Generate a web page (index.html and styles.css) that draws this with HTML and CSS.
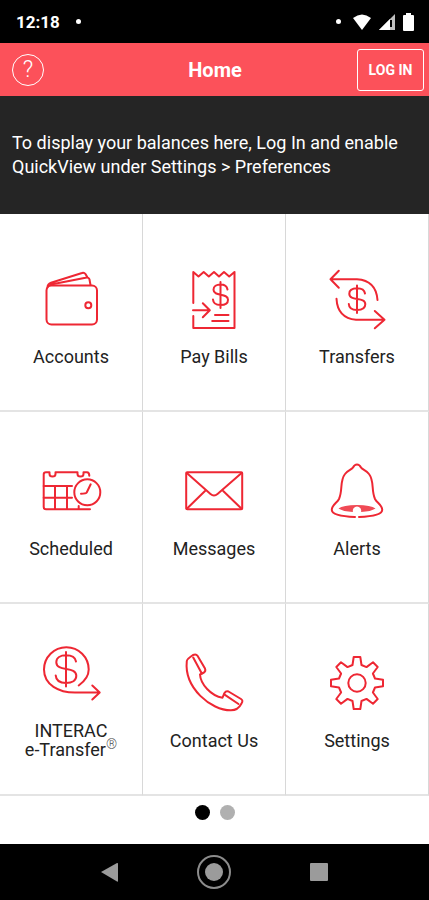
FILE: index.html
```html
<!DOCTYPE html>
<html lang="en">
<head>
<meta charset="UTF-8">
<meta name="viewport" content="width=device-width, initial-scale=1.0">
<title>Home</title>
<link rel="stylesheet" href="styles.css">
</head>
<body>

<div class="status-bar">
    <span class="time">12:18</span>
    <span class="status-dot"></span>
    <div class="status-icons">
        <span class="status-dot"></span>
        <svg class="wifi" viewBox="0 0 18 16"><path d="M0 4Q9 -3 18 4L9 16z"/></svg>
        <svg class="signal" viewBox="0 0 16 16"><path d="M0 16L16 0V16z" opacity=".75"/><path d="M0 16L11 5V16z"/><path class="signal-gap" d="M12 6v7"/></svg>
        <svg class="battery" viewBox="0 0 11 18"><path d="M3 0h5v2h2q1 0 1 1v14q0 1-1 1H1q-1 0-1-1V3q0-1 1-1h2z"/></svg>
    </div>
</div>

<header class="header">
    <button class="help" aria-label="Help">?</button>
    <h1>Home</h1>
    <button class="login">LOG IN</button>
</header>

<p class="notice">To display your balances here, Log In and enable QuickView under Settings &gt; Preferences</p>

<nav class="tiles">
    <a href="#" class="tile">
        <svg class="icon" viewBox="0 0 64 64">
            <rect x="7.5" y="18.5" width="50.5" height="39" rx="5"/>
            <path d="M8.500 20.500Q8.500 17 12 15.800L43 6Q45 5 46.500 7L48.500 10.500M12 17.500L46.500 10.800Q50 10 50.500 12.500L51.500 18"/>
            <circle cx="49.300" cy="38.300" r="3"/>
        </svg>
        <span>Accounts</span>
    </a>
    <a href="#" class="tile">
        <svg class="icon" viewBox="0 0 64 64">
            <path d="M11.300 36V5L16.500 9.500L21.700 5L26.800 9.500L32 5L37 9.500L42 5L47.200 9.500L52.500 5V61H11.300V49"/>
            <path d="M11 43.300H27.500M20.800 36.300L27.800 43.300L20.800 50.300M33 48h13.500M30.200 54h16.300"/>
            <path d="M38.500 15v26M45.500 22.500c-.5-3-3-5-7-5s-7 2-7 5.200c0 7.500 14.500 2.500 14.500 10 0 3.500-3 5.300-7.500 5.300s-7.300-2-7.500-5.500"/>
        </svg>
        <span>Pay Bills</span>
    </a>
    <a href="#" class="tile">
        <svg class="icon" viewBox="0 0 64 64">
            <path d="M13.800 3.700L5.500 12.300L13.800 20.700M5.500 12.300H32Q51 13.500 52.500 33"/>
            <path d="M49.800 44L59.500 52.700L49.800 61.300M59.500 52.700H31Q12.500 51 11.500 31.700"/>
            <path d="M32 18.500v27.500M40 26.500c-.5-3.300-3.500-5.200-8-5.200s-7.700 2-7.700 5.500c0 8 16 2.500 16 10.500 0 3.700-3.500 5.700-8.300 5.700s-8-2.200-8.200-6"/>
        </svg>
        <span>Transfers</span>
    </a>
    <a href="#" class="tile">
        <svg class="icon" viewBox="0 0 64 64">
            <path d="M51 50.300H7q-2.300 0-2.300-2.300V15.600q0-2.300 2.300-2.300H10.500V15q0 2.500 3 2.500t3-2.500V13.300H38.500V15q0 2.500 3 2.500t3-2.500V13.300H48q2.300 0 2.300 3.500"/>
            <path d="M4.700 27H33M4.700 38.700H33M16 27V50M28 27V50M39.700 47V50"/>
            <circle cx="48.300" cy="33.300" r="13"/>
            <path d="M51.700 25.300L47.700 33.500Q47 34.700 42 34.700"/>
        </svg>
        <span>Scheduled</span>
    </a>
    <a href="#" class="tile">
        <svg class="icon" viewBox="0 0 64 64">
            <rect x="4.200" y="13.300" width="56" height="37" rx="1"/>
            <path d="M4.800 14L28.500 35Q32 38 35.500 35L59.600 14M4.800 49.700L23 32M59.600 49.700L41.200 32"/>
        </svg>
        <span>Messages</span>
    </a>
    <a href="#" class="tile">
        <svg class="icon" viewBox="0 0 64 64">
            <path d="M30 58C17 57.500 7 55.500 6.800 51C6.600 46 12 44 14 40C18 31 14.500 22 20 15C22.500 11.500 27 10.500 28 8.500Q29.500 5.500 32 5.500T36 8.500C37 10.500 41.500 11.500 44 15C49.500 22 46 31 50 40C52 44 57.400 46 57.200 51C57 55.500 47 57.500 34 58"/>
            <path class="fill" d="M13.500 49.500Q18 46 32 46T50.500 49.500Q46 52.500 36 53A4.200 4.200 0 1 0 28 53Q18 52.500 13.500 49.500z"/>
        </svg>
        <span>Alerts</span>
    </a>
    <a href="#" class="tile">
        <svg class="icon" viewBox="0 0 64 64">
            <path d="M39.700 44.500C46 40 49.700 35 49.700 28.500A22.300 22.300 0 1 0 5 28.500C5 44 20 51.500 36 51.500H60.500M53.300 44.500L60.700 51.500L53.300 58.500"/>
            <path d="M27 11v34.500M37 20.500c-.7-4-4.500-6.200-10-6.200s-9.700 2.500-9.700 6.900c0 10 20 3.500 20 13.500 0 4.700-4.200 7.200-10.300 7.200s-10-2.700-10.300-7.500"/>
        </svg>
        <span>INTERAC<br>e-Transfer<sup>®</sup></span>
    </a>
    <a href="#" class="tile">
        <svg class="icon" viewBox="0 0 64 64">
            <path d="M4.800 10Q5 8 11 4Q14 2.500 15.500 4.800L23 17.500Q24 20 22 21.500L18 23.500C18.500 33 29 45 40.500 46.700L42.500 42Q44 39.500 46.500 40.500L59 48Q61.500 49.700 59.500 52.500Q56 59.300 49 59.300C29 59.500 2 37 4.800 10z"/>
            <path d="M11.200 6.500L19.800 22.500M42.200 43.300L56.500 53"/>
        </svg>
        <span>Contact Us</span>
    </a>
    <a href="#" class="tile">
        <svg class="icon" viewBox="0 0 64 64">
            <path d="M28.700 6H35.300L36.500 14L41.500 16.100L48 11.300L52.700 16L47.900 22.500L50 27.500L58 28.700V35.300L50 36.500L47.900 41.500L52.700 48L48 52.700L41.500 47.900L36.500 50L35.300 58H28.700L27.500 50L22.500 47.900L16 52.700L11.300 48L16.100 41.500L14 36.500L6 35.300V28.700L14 27.500L16.100 22.500L11.300 16L16 11.300L22.500 16.100L27.500 14z"/>
            <circle cx="32" cy="32" r="8.700"/>
        </svg>
        <span>Settings</span>
    </a>
</nav>

<div class="pager">
    <button class="page active" aria-label="Page 1"></button>
    <button class="page" aria-label="Page 2"></button>
</div>

<div class="nav-bar">
    <button aria-label="Back"><svg viewBox="0 0 34 34"><path d="M8 17L24 8Q25 7.500 25 9V26Q25 27 24 26.500z"/></svg></button>
    <button aria-label="Home"><svg viewBox="0 0 34 34"><circle class="ring" cx="17" cy="17" r="16"/><circle cx="17" cy="17" r="9"/></svg></button>
    <button aria-label="Recent apps"><svg viewBox="0 0 34 34"><rect x="8" y="8" width="18" height="18" rx="1"/></svg></button>
</div>

</body>
</html>
```
FILE: styles.css
```css
* {
    box-sizing: border-box;
}

body {
    font-family: Roboto, "Liberation Sans", sans-serif;
    background-color: #fff;
    margin: 0;
    display: flex;
    flex-direction: column;
    min-height: 100vh;
}

button {
    font-family: inherit;
    background: none;
    border: none;
    padding: 0;
    cursor: pointer;
}

.status-bar {
    height: 43px;
    padding: 0 15px 0 16px;
    background-color: #000;
    color: #fff;
    display: flex;
    align-items: center;
    gap: 16px;
}

.time {
    font-size: 17px;
    font-weight: bold;
}

.status-dot {
    width: 5px;
    height: 5px;
    border-radius: 50%;
    background-color: #fff;
}

.status-icons {
    margin-left: auto;
    display: flex;
    align-items: center;
    gap: 8px;
    fill: #fff;
}

.status-icons .status-dot {
    margin-right: 4px;
}

.wifi {
    width: 18px;
    height: 16px;
}

.signal {
    width: 16px;
    height: 16px;
}

.signal-gap {
    stroke: #000;
    stroke-width: 2;
}

.battery {
    width: 11px;
    height: 18px;
}

.header {
    height: 53px;
    padding: 0 5px 0 12px;
    background-color: #fc515a;
    color: #fff;
    display: grid;
    grid-template-columns: 1fr auto 1fr;
    align-items: center;
}

.header h1 {
    margin: 0;
    padding-right: 6px;
    font-size: 20px;
    font-weight: bold;
}

.help {
    width: 32px;
    height: 32px;
    border: 1px solid #fff;
    border-radius: 50%;
    color: #fff;
    font-size: 23px;
    font-weight: 300;
    line-height: 30px;
}

.login {
    justify-self: end;
    width: 67px;
    height: 42px;
    border: 1px solid #fff;
    border-radius: 3px;
    color: #fff;
    font-size: 14px;
    font-weight: bold;
}

.notice {
    margin: 0;
    height: 118px;
    padding: 35px 12px;
    background-color: #252525;
    color: #fff;
    font-size: 18px;
    line-height: 24px;
}

.tiles {
    flex: 1;
    display: grid;
    grid-template-columns: repeat(3, 1fr);
    grid-template-rows: 33fr 32fr 32fr;
}

.tile {
    display: flex;
    flex-direction: column;
    align-items: center;
    justify-content: center;
    gap: 16px;
    padding-top: 2px;
    border-right: 1px solid #d8d8d8;
    border-bottom: 2px solid #e4e4e4;
    color: #222;
    font-size: 18px;
    line-height: 19px;
    text-align: center;
    text-decoration: none;
}

.tile:nth-child(-n+3) {
    padding-top: 8px;
}

.tile sup {
    color: #555;
    font-size: 14px;
    font-weight: 300;
    line-height: 0;
}

.icon {
    width: 64px;
    height: 64px;
    fill: none;
    stroke: #ee2733;
    stroke-width: 2;
    stroke-linecap: round;
    stroke-linejoin: round;
}

.icon .fill {
    fill: #f04a55;
    stroke: none;
}

.pager {
    height: 48px;
    padding-top: 9px;
    display: flex;
    justify-content: center;
    gap: 10px;
}

.page {
    width: 15px;
    height: 15px;
    border-radius: 50%;
    background-color: #b0b0b0;
}

.page.active {
    background-color: #000;
}

.nav-bar {
    height: 56px;
    padding: 0 58px;
    background-color: #000;
    display: flex;
    align-items: center;
    justify-content: space-around;
}

.nav-bar svg {
    display: block;
    width: 34px;
    height: 34px;
    fill: #9b9b9b;
}

.nav-bar .ring {
    fill: none;
    stroke: #8c8c8c;
    stroke-width: 2;
}
```
